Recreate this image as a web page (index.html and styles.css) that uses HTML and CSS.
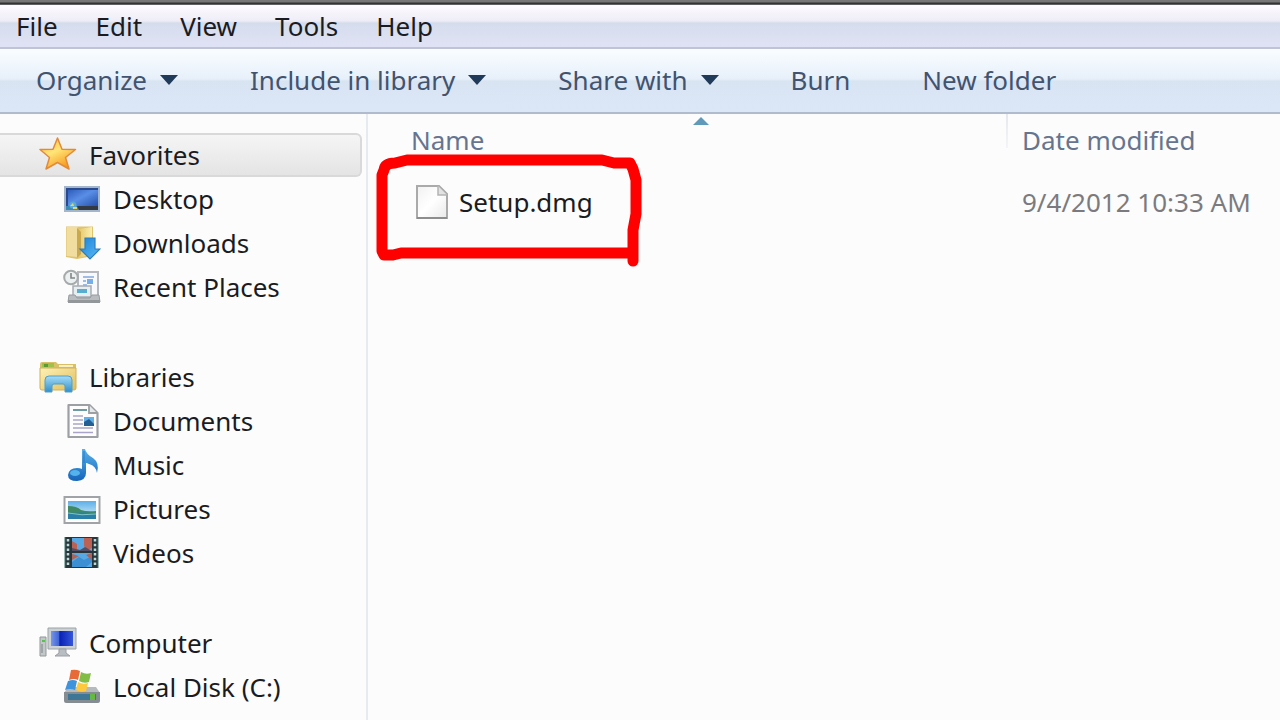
FILE: index.html
```html
<!DOCTYPE html>
<html lang="en">
<head>
<meta charset="utf-8">
<meta name="viewport" content="width=device-width, initial-scale=1">
<title>Explorer</title>
<link rel="stylesheet" href="styles.css">
</head>
<body>
<div class="window">
  <div class="titlebar-edge"></div>
  <nav class="menubar" aria-label="Menu">
    <button type="button">File</button>
    <button type="button">Edit</button>
    <button type="button">View</button>
    <button type="button">Tools</button>
    <button type="button">Help</button>
  </nav>
  <div class="toolbar" role="toolbar" aria-label="Commands">
    <button type="button">Organize <svg class="caret" viewBox="0 0 18 10"><path d="M0 0h18L9 10z"/></svg></button>
    <button type="button">Include in library <svg class="caret" viewBox="0 0 18 10"><path d="M0 0h18L9 10z"/></svg></button>
    <button type="button">Share with <svg class="caret" viewBox="0 0 18 10"><path d="M0 0h18L9 10z"/></svg></button>
    <button type="button">Burn</button>
    <button type="button">New folder</button>
  </div>
  <div class="body">
    <aside class="sidebar">
      <section class="group">
        <a class="row head selected" href="#">
          <svg class="icon" viewBox="0 0 38 36">
            <defs><linearGradient id="star" x1="0" y1="0" x2="0.6" y2="1"><stop offset="0" stop-color="#ffb52e"/><stop offset=".5" stop-color="#ffe578"/><stop offset="1" stop-color="#f79a1c"/></linearGradient></defs>
            <path d="M18.500 1L23 12.200L36.500 12.500L26.500 20.500L30 32L18.500 25.500L7 32L10.500 20.500L1 12.500L14 12.200Z" fill="url(#star)" stroke="#e38a3a" stroke-width="1.500" stroke-linejoin="round"/>
          </svg>
          <span>Favorites</span></a>
        <a class="row" href="#">
          <svg class="icon" viewBox="0 0 38 36">
            <defs><linearGradient id="desk" x1="0" y1="0" x2="1" y2="1"><stop offset="0" stop-color="#2553b4"/><stop offset=".5" stop-color="#5a8ee6"/><stop offset="1" stop-color="#2450ac"/></linearGradient></defs>
            <path d="M1 5h36v26H1z" fill="#a3b6cc"/><path d="M3 7h32v18H3z" fill="url(#desk)"/><path d="M3 7h32v2H3zM3 7h2v18H3z" fill="#2b4a8d"/>
            <path d="M3 25h32v4H3z" fill="#343a43"/><path d="M3 25h11l2 4H3z" fill="#3b88b4"/><circle cx="10" cy="24" r="3.500" fill="#59a8d8"/><path d="M7 25l3-3 1 3zM10 26h4v2h-4z" fill="#e0d76a"/>
          </svg>
          <span>Desktop</span></a>
        <a class="row" href="#">
          <svg class="icon" viewBox="0 0 38 36">
            <defs><linearGradient id="fold" x1="0" y1="0" x2="1" y2="0"><stop offset="0" stop-color="#e4c76c"/><stop offset="1" stop-color="#fbf0b0"/></linearGradient><linearGradient id="down" x1="0" y1="0" x2="1" y2="1"><stop offset="0" stop-color="#1b83d8"/><stop offset="1" stop-color="#5bbcf5"/></linearGradient></defs>
            <path d="M3 1.500h27V31L14 34 3 32z" fill="#dfc36d"/><path d="M16 4l13-2v27l-13 4z" fill="url(#fold)"/><path d="M3.500 2h11v30l-11-1z" fill="#f1dda0"/><path d="M14 3l4 4v22l-4 4z" fill="#caa84d"/>
            <path d="M22 13h10v11h5L27 34 17 24h5z" fill="url(#down)" stroke="#2e7dc1" stroke-width="1.200"/>
          </svg>
          <span>Downloads</span></a>
        <a class="row" href="#">
          <svg class="icon" viewBox="0 0 38 36">
            <path d="M15 3h20v25H15z" fill="#f7f9fb" stroke="#b5b9be" stroke-width="2"/><path d="M20 8h11M20 12h3M20 16h4" stroke="#9fbce8" stroke-width="2"/><path d="M24 10h6v5h-6z" fill="#78aeea"/>
            <path d="M10 17h18v11H10z" fill="#e7eef2" stroke="#a7adb3" stroke-width="1.500"/><path d="M14 20h10v4H14z" fill="#58aed0"/>
            <path d="M6 26h6l2 3h13l2-3h7l1 7H5z" fill="#b9bcbf" stroke="#989b9f"/><path d="M5 31h32v3H5z" fill="#94979a"/>
            <circle cx="8" cy="8.500" r="6.800" fill="#edf0f0" stroke="#a5aaab" stroke-width="2"/><path d="M8 4v5h4" fill="none" stroke="#7f8689" stroke-width="1.600"/>
          </svg>
          <span>Recent Places</span></a>
      </section>
      <section class="group">
        <a class="row head" href="#">
          <svg class="icon" viewBox="0 0 38 36">
            <defs><linearGradient id="lib" x1="0" y1="0" x2="0" y2="1"><stop offset="0" stop-color="#a6dcf6"/><stop offset="1" stop-color="#2f8fcc"/></linearGradient><linearGradient id="libf" x1="0" y1="0" x2="1" y2="1"><stop offset="0" stop-color="#fdf1b8"/><stop offset="1" stop-color="#e2be57"/></linearGradient></defs>
            <path d="M1 5q0-2 2-2h14l2 2h18v4H1z" fill="#d9c067"/><path d="M3 4h12v4H3z" fill="#9fc14b"/><path d="M5 5h4v3H5z" fill="#5e9a34"/><path d="M20 6h14v2H20z" fill="#f8efc2"/>
            <path d="M1 9h36v20q0 2-2 2H3q-2 0-2-2z" fill="url(#libf)" stroke="#d1b05b"/>
            <path d="M6 33V21q0-4 4-4h19q4 0 4 4v12h-7v-6q0-2-2-2h-9q-2 0-2 2v6z" fill="url(#lib)" stroke="#4f9fcd"/>
          </svg>
          <span>Libraries</span></a>
        <a class="row" href="#">
          <svg class="icon" viewBox="0 0 38 36">
            <path d="M5.500 2h21l8 8v24h-29z" fill="#fdfdfe" stroke="#9ca0a4" stroke-width="2.200" stroke-linejoin="round"/><path d="M26 2v8h8" fill="#e6e9ec" stroke="#9ca0a4" stroke-width="1.800"/>
            <path d="M10 7h14" stroke="#5c9099" stroke-width="1.800"/><path d="M10 13h10M10 17h10M10 21h10M10 25h20M10 29.500h20" stroke="#aaa5c8" stroke-width="1.600"/><path d="M21 14h10v9H21z" fill="#63b0e8"/><path d="M21 19l5-3 5 5v2H21z" fill="#235f92"/>
          </svg>
          <span>Documents</span></a>
        <a class="row" href="#">
          <svg class="icon" viewBox="0 0 38 36">
            <defs><linearGradient id="note" x1="0" y1="0" x2="0" y2="1"><stop offset="0" stop-color="#58b2eb"/><stop offset="1" stop-color="#1565bb"/></linearGradient></defs>
            <path d="M19 2h3q1 5 8 9 7 5 4 15-1-7-8-9-2-1-3-1v10q0 7-9 8-9 0-9-6 1-7 9-7 3 0 5 1z" fill="url(#note)"/><ellipse cx="12" cy="26" rx="5" ry="3" fill="#55b3eb"/><path d="M21 4v12" stroke="#2b79c4"/>
          </svg>
          <span>Music</span></a>
        <a class="row" href="#">
          <svg class="icon" viewBox="0 0 38 36">
            <defs><linearGradient id="sky" x1="0" y1="0" x2="0" y2="1"><stop offset="0" stop-color="#5caee9"/><stop offset="1" stop-color="#e0f4f7"/></linearGradient></defs>
            <path d="M1.500 6h35v26h-35z" fill="#fff" stroke="#a0a4a7" stroke-width="2"/><path d="M5 10h28v18H5z" fill="url(#sky)"/><path d="M5 15q9 0 13 4 6 2 15 1v3H5z" fill="#3f8a64"/><path d="M5 22q13-1 28 0v6H5z" fill="#297fa8"/><path d="M5 22q14 3 28 1" stroke="#7fc4c7" fill="none"/>
          </svg>
          <span>Pictures</span></a>
        <a class="row" href="#">
          <svg class="icon" viewBox="0 0 38 36">
            <path d="M2 2h33v31H2z" fill="#26363b"/><path d="M9 3h20v13H9zM9 18h20v14H9z" fill="#57a9e5"/>
            <path d="M21 3h8v10l-5 2-3-4zM9 6l5 3v5l-5 2z" fill="#bb6254"/><path d="M9 27l7-5 5 3 8-4v6l-6 5H9z" fill="#3b8fd2"/><path d="M23 20l6-2v7zM9 19l7 2-7 4z" fill="#ad6357"/><path d="M9 13l8 2 5-3 7 4H9z" fill="#544e64"/>
            <path d="M5 4v28M32 4v28" stroke="#bddbd8" stroke-width="2.500" stroke-dasharray="2.500 2.200"/><path d="M2 2v31M35 2v31" stroke="#3c7771"/>
          </svg>
          <span>Videos</span></a>
      </section>
      <section class="group">
        <a class="row head" href="#">
          <svg class="icon" viewBox="0 0 38 36">
            <defs><linearGradient id="mon" x1="0" y1="0" x2="1" y2="0"><stop offset="0" stop-color="#7796ea"/><stop offset=".35" stop-color="#4165d7"/><stop offset=".4" stop-color="#0b20b5"/><stop offset="1" stop-color="#3456d9"/></linearGradient></defs>
            <path d="M1 12h6v19H1z" fill="#c2c7c8" stroke="#929799"/><path d="M3 15h3v2H3z" fill="#58bf50"/><path d="M3 19v9" stroke="#7d8588"/>
            <path d="M9 3h28v21H9z" fill="#cbd1d5" stroke="#9ca3a8"/><path d="M12 6h22v15H12z" fill="url(#mon)"/><path d="M20 24h7v4l4 3H16l4-3z" fill="#b8bdc1" stroke="#999fa3"/>
          </svg>
          <span>Computer</span></a>
        <a class="row" href="#">
          <svg class="icon" viewBox="0 0 38 36">
            <path d="M5 18h28l4 6v8q0 2-2 2H3q-2 0-2-2v-8z" fill="#b5babd"/><path d="M1 23h36v8q0 3-3 3H4q-3 0-3-3z" fill="#858c92"/><path d="M5 25h28v6H5z" fill="#3e7795"/><path d="M27 25h5v6h-5z" fill="#65b842"/>
            <path d="M8 1q5-1 9 1l-2 9q-4-2-9 0z" fill="#e76b38"/><path d="M18 3q5 3 10 1l-2 9q-5 2-10-1z" fill="#84bd45"/><path d="M5 12q5-2 9 0l-2 9q-5-2-10 0z" fill="#3f93dc"/><path d="M15 13q5 3 10 1l-2 8q-5 2-10-1z" fill="#ffc93e"/>
          </svg>
          <span>Local Disk (C:)</span></a>
      </section>
    </aside>
    <main class="files">
      <svg class="sort" viewBox="0 0 16 8"><path d="M0 8L8 0l8 8z"/></svg>
      <table>
        <thead><tr><th class="name" scope="col">Name</th><th scope="col">Date modified</th></tr></thead>
        <tbody><tr><td class="name"><span class="file"><svg class="page" viewBox="0 0 32 34">
          <defs><linearGradient id="paper" x1="0" y1="0" x2="1" y2="1"><stop offset="0" stop-color="#f1f1f1"/><stop offset=".5" stop-color="#fff"/><stop offset="1" stop-color="#e9e9e9"/></linearGradient></defs>
          <path d="M1 1h22l8 8v24H1z" fill="url(#paper)" stroke="#aaa" stroke-width="2"/><path d="M22 1v9h9" fill="#e2e2e2" stroke="#b4b4b4" stroke-width="1.500"/><path d="M1 33h30" stroke="#8d8d8d" stroke-width="2"/></svg>
          <span>Setup.dmg</span></span></td><td>9/4/2012 10:33 AM</td></tr></tbody>
      </table>
      <svg class="marker" viewBox="0 0 272 118"><path d="M11 97V24L13 19Q14 12 24 12L36 9H231L243 12H259L262 18L265 29V63L262 79V102M262 110V102H30L22 104H13L11 100V92"/></svg>
    </main>
  </div>
</div>
</body>
</html>
```
FILE: styles.css
```css
* {
  box-sizing: border-box;
}

body {
  margin: 0;
  background: #fcfcfc;
  color: #1b1b22;
  font: 26px/36px "Noto Sans", "Open Sans", sans-serif;
}

button {
  padding: 0;
  border: 0;
  background: none;
  color: inherit;
  font: inherit;
  white-space: nowrap;
}

.window {
  display: flex;
  flex-direction: column;
  min-height: 100vh;
  overflow: hidden;
}

.titlebar-edge {
  height: 5px;
  background: linear-gradient(#777 0 2px, #333 3px 4px, #8c8c90);
}

.menubar {
  display: flex;
  gap: 38px;
  height: 44px;
  padding: 3px 16px 5px;
  background: linear-gradient(#fefcff, #eeecf6 16px, #d5dded 18px, #dfe2f4 40px);
  border-bottom: 2px solid #bfc3d4;
}

.toolbar {
  display: flex;
  align-items: center;
  gap: 72px;
  height: 65px;
  padding: 0 36px 2px;
  background: linear-gradient(#f9fdff, #e7f0fa 30px, #d9e4f3 32px, #dbe7f7);
  border-bottom: 2px solid #b0bccd;
  color: #42536f;
}

.toolbar button {
  display: flex;
  align-items: center;
  gap: 13px;
}

.caret {
  width: 18px;
  height: 10px;
  fill: #203a59;
}

.body {
  display: flex;
  flex: 1;
}

.sidebar {
  display: flex;
  flex: none;
  flex-direction: column;
  gap: 46px;
  width: 368px;
  padding: 19px 4px 0 0;
  border-right: 2px solid #e6ebf1;
}

.row {
  display: flex;
  align-items: center;
  gap: 12px;
  height: 44px;
  padding-left: 63px;
  color: inherit;
  text-decoration: none;
  white-space: nowrap;
}

.head {
  padding-left: 39px;
}

.selected {
  background: linear-gradient(#f5f5f5, #e4e4e4);
  border: 2px solid #d9d9d9;
  border-left: 0;
  border-radius: 0 6px 6px 0;
}

.icon {
  flex: none;
  width: 38px;
  height: 36px;
}

.files {
  position: relative;
  flex: 1;
  min-width: 0;
}

table {
  width: 100%;
  border-collapse: collapse;
  white-space: nowrap;
}

th,
td {
  padding: 8px 0 0 14px;
  font-weight: 400;
  text-align: left;
}

th {
  height: 70px;
  color: #66758f;
  vertical-align: top;
}

thead .name {
  background: linear-gradient(#e4e8ee, #f4f5f7) top right / 2px 34px no-repeat;
}

td {
  height: 50px;
  padding-top: 0;
  color: #7b7b7f;
  vertical-align: top;
}

.name {
  width: 640px;
  padding-left: 43px;
}

td.name {
  padding-left: 48px;
  color: #1b1b22;
}

.file {
  display: flex;
  align-items: center;
  gap: 11px;
}

.page {
  width: 32px;
  height: 34px;
}

.sort {
  position: absolute;
  top: 3px;
  left: 325px;
  width: 16px;
  height: 8px;
  fill: #5f9aba;
}

.marker {
  position: absolute;
  top: 37px;
  left: 3px;
  width: 272px;
  height: 118px;
  fill: none;
  stroke: #fe0000;
  stroke-width: 11px;
  stroke-linecap: round;
  stroke-linejoin: round;
  pointer-events: none;
}
```
